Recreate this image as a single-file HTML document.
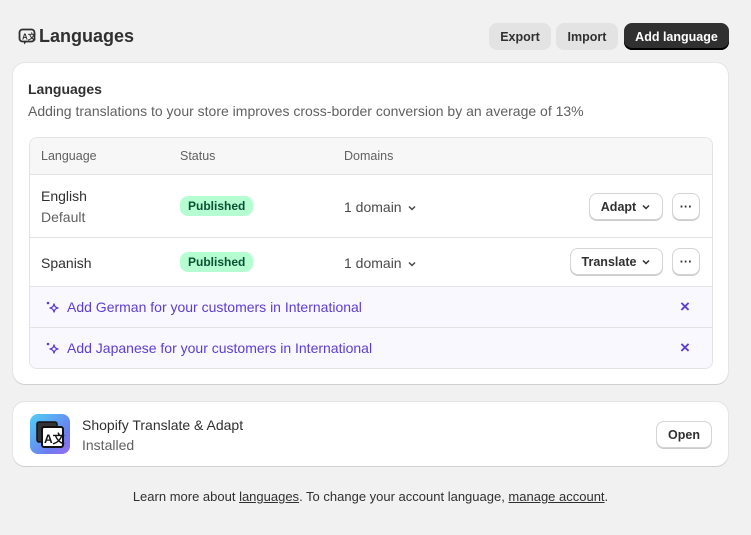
<!DOCTYPE html>
<html><head><style>
*{box-sizing:border-box;margin:0;padding:0}
body{width:751px;height:535px;background:#f1f1f1;font-family:"Liberation Sans",sans-serif;color:#303030;font-size:13px;position:relative;overflow:hidden}
.abs{position:absolute}
.btn{position:absolute;height:27px;border-radius:8px;font-size:12.5px;font-weight:bold;display:flex;align-items:center;justify-content:center}
.gbtn{background:#e3e3e3;color:#303030}
.wbtn{background:#fff;border:1px solid #d4d4d4;box-shadow:0 1px 0 #ccc;color:#303030;font-weight:bold}
.card{position:absolute;background:#fff;border-radius:12px;box-shadow:0 1px 0 #d0d0d0,0 0 0 1px #e5e5e5}
.badge{position:absolute;background:#b4fed2;color:#0c5132;font-weight:bold;font-size:12px;border-radius:8px;padding:3px 8px}
.sugg{color:#5b3fd0;font-size:14px}
.x{color:#5b3fd0;font-size:17px;font-weight:bold}
.chev{display:inline-block;margin-left:5px;vertical-align:middle}
</style></head><body>
<svg class="abs" style="left:18px;top:28px" width="18" height="18" viewBox="0 0 18 18"><rect x="1.5" y="1.5" width="15" height="12" rx="3" fill="none" stroke="#303030" stroke-width="1.8"/><path d="M6 13.5v3l3-3" fill="#303030"/><text x="4" y="11.5" font-size="8" font-weight="bold" fill="#303030" font-family="Liberation Sans">A文</text></svg>
<div class="abs" style="left:39px;top:26px;font-size:18px;font-weight:bold;color:#303030">Languages</div>
<div class="btn gbtn" style="left:489px;top:23px;width:62px">Export</div>
<div class="btn gbtn" style="left:556px;top:23px;width:62px">Import</div>
<div class="btn" style="left:624px;top:23px;width:105px;background:#303030;color:#fff;box-shadow:inset 0 -2px 0 #000">Add language</div>

<div class="card" style="left:13px;top:63px;width:715px;height:321px"></div>
<div class="abs" style="left:28px;top:81px;font-size:14px;font-weight:bold">Languages</div>
<div class="abs" style="left:28px;top:103px;font-size:14px;color:#616161">Adding translations to your store improves cross-border conversion by an average of 13%</div>
<div class="abs" style="left:29px;top:137px;width:684px;height:232px;border:1px solid #e3e3e3;border-radius:8px;overflow:hidden">
 <div style="position:absolute;left:0;top:0;width:100%;height:37px;background:#f7f7f7;border-bottom:1px solid #e3e3e3"></div>
 <div style="position:absolute;left:0;top:99px;width:100%;border-top:1px solid #e3e3e3"></div>
 <div style="position:absolute;left:0;top:148px;width:100%;height:84px;background:#f8f8fe;border-top:1px solid #e3e3e3"></div>
 <div style="position:absolute;left:0;top:189px;width:100%;border-top:1px solid #e3e3e3"></div>
</div>
<div class="abs" style="left:41px;top:149px;font-size:12.5px;color:#616161">Language</div>
<div class="abs" style="left:180px;top:149px;font-size:12.5px;color:#616161">Status</div>
<div class="abs" style="left:344px;top:149px;font-size:12.5px;color:#616161">Domains</div>
<div class="abs" style="left:41px;top:188px;font-size:14px">English</div>
<div class="abs" style="left:41px;top:209px;font-size:14px;color:#616161">Default</div>
<div class="badge" style="left:180px;top:196px">Published</div>
<div class="abs" style="left:344px;top:199px;font-size:14px;color:#4a4a4a">1 domain<svg class="chev" width="10" height="10" viewBox="0 0 10 10"><path d="M2 3.5l3 3 3-3" fill="none" stroke="#4a4a4a" stroke-width="1.5"/></svg></div>
<div class="btn wbtn" style="left:589px;top:193px;width:74px">Adapt<svg class="chev" width="10" height="10" viewBox="0 0 10 10"><path d="M2 3.5l3 3 3-3" fill="none" stroke="#303030" stroke-width="1.5"/></svg></div>
<div class="btn wbtn" style="left:672px;top:193px;width:28px">···</div>
<div class="abs" style="left:41px;top:255px;font-size:14px">Spanish</div>
<div class="badge" style="left:180px;top:252px">Published</div>
<div class="abs" style="left:344px;top:255px;font-size:14px;color:#4a4a4a">1 domain<svg class="chev" width="10" height="10" viewBox="0 0 10 10"><path d="M2 3.5l3 3 3-3" fill="none" stroke="#4a4a4a" stroke-width="1.5"/></svg></div>
<div class="btn wbtn" style="left:570px;top:248px;width:93px">Translate<svg class="chev" width="10" height="10" viewBox="0 0 10 10"><path d="M2 3.5l3 3 3-3" fill="none" stroke="#303030" stroke-width="1.5"/></svg></div>
<div class="btn wbtn" style="left:672px;top:248px;width:28px">···</div>
<svg class="abs" style="left:45px;top:300px" width="16" height="16" viewBox="0 0 16 16"><circle cx="3" cy="3" r="1.3" fill="#5b3fd0"/><path d="M9 4c.5 2.5 1.5 3.5 4 4-2.5.5-3.5 1.5-4 4-.5-2.5-1.5-3.5-4-4 2.5-.5 3.5-1.5 4-4z" fill="none" stroke="#5b3fd0" stroke-width="1.4" stroke-linejoin="round"/></svg>
<div class="abs sugg" style="left:67px;top:299px">Add German for your customers in International</div>
<div class="abs x" style="left:680px;top:297px">×</div>
<svg class="abs" style="left:45px;top:341px" width="16" height="16" viewBox="0 0 16 16"><circle cx="3" cy="3" r="1.3" fill="#5b3fd0"/><path d="M9 4c.5 2.5 1.5 3.5 4 4-2.5.5-3.5 1.5-4 4-.5-2.5-1.5-3.5-4-4 2.5-.5 3.5-1.5 4-4z" fill="none" stroke="#5b3fd0" stroke-width="1.4" stroke-linejoin="round"/></svg>
<div class="abs sugg" style="left:67px;top:340px">Add Japanese for your customers in International</div>
<div class="abs x" style="left:680px;top:338px">×</div>

<div class="card" style="left:13px;top:402px;width:715px;height:64px"></div>
<div class="abs" style="left:30px;top:414px;width:40px;height:40px;border-radius:8px;background:linear-gradient(135deg,#4fd0f5,#6c7cf0 70%,#9a6cf0)"></div>
<svg class="abs" style="left:30px;top:414px" width="40" height="40" viewBox="0 0 40 40"><rect x="7" y="8" width="20" height="20" rx="2" fill="#333" stroke="#111" stroke-width="1.5"/><rect x="12" y="13" width="21" height="20" rx="2" fill="#fff" stroke="#111" stroke-width="2"/><text x="14" y="29" font-size="12" font-weight="bold" fill="#111" font-family="Liberation Sans">A文</text></svg>
<div class="abs" style="left:82px;top:417px;font-size:14px">Shopify Translate &amp; Adapt</div>
<div class="abs" style="left:82px;top:437px;font-size:14px;color:#616161">Installed</div>
<div class="btn wbtn" style="left:656px;top:421px;width:56px">Open</div>
<div class="abs" style="left:0;top:489px;width:741px;text-align:center;font-size:13px">Learn more about <u>languages</u>. To change your account language, <u>manage account</u>.</div>
</body></html>
